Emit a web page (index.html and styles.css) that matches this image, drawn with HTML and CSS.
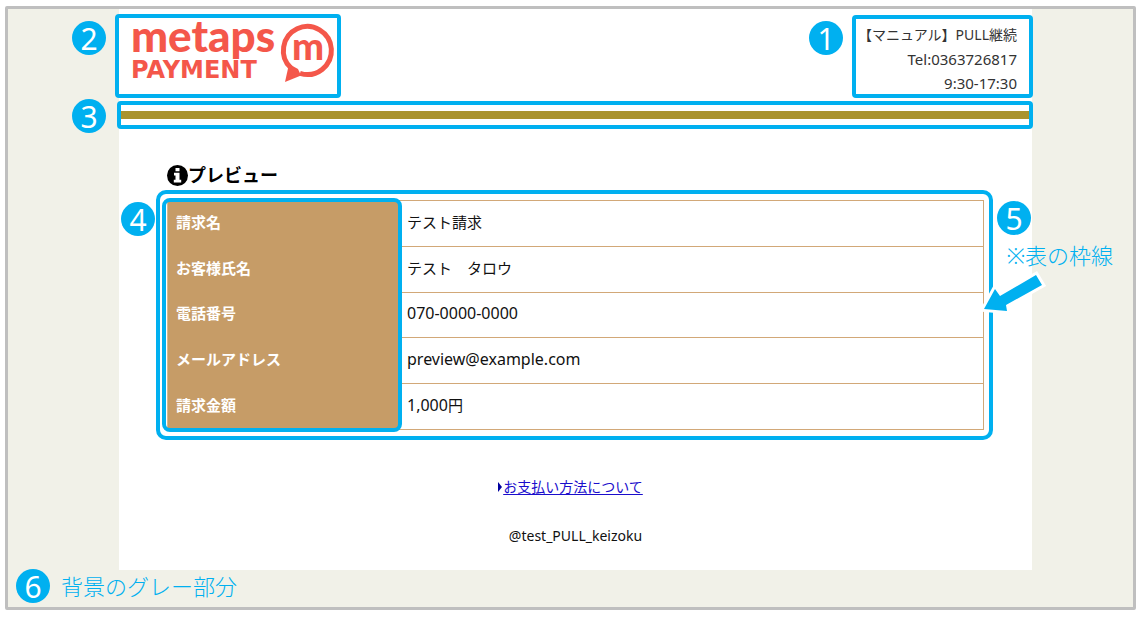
FILE: index.html
```html
<!DOCTYPE html>
<html lang="ja">
<head>
<meta charset="utf-8">
<meta name="viewport" content="width=device-width, initial-scale=1">
<title>プレビュー</title>
<link rel="stylesheet" href="styles.css">
</head>
<body>
<div class="frame">
  <div class="page">
    <header class="header">
      <div class="brand">
        <svg class="logo" viewBox="0 0 202 60" role="img" aria-label="metaps PAYMENT">
          <text class="logo-name" x="-2" y="29">metaps</text>
          <text class="logo-sub" x="-2" y="55">PAYMENT</text>
          <path class="logo-bubble" d="M158 45 A24 24 0 1 1 167 50.300"/>
          <path class="logo-tail" d="M156 41 L152 59 L168 52.500 L165 46 Z"/>
          <text class="logo-mark" x="175" y="37" text-anchor="middle">m</text>
        </svg>
        <span class="outline outline-brand"></span>
        <span class="badge badge-brand">2</span>
      </div>
      <div class="contact">
        <p>【マニュアル】PULL継続</p>
        <p class="latin">Tel:0363726817</p>
        <p class="latin">9:30⁃17:30</p>
        <span class="outline outline-contact"></span>
        <span class="badge badge-contact">1</span>
      </div>
    </header>
    <div class="rule">
      <span class="outline outline-rule"></span>
      <span class="badge badge-rule">3</span>
    </div>
    <main class="main">
      <h1 class="title">
        <svg class="info" viewBox="0 0 21 21" aria-hidden="true">
          <circle cx="10.500" cy="10.500" r="10.500"/>
          <path d="M8.500 3h4v3.200h-4z M7 7.800h5.500v7h1.700v2.700H6.800v-2.700h1.700v-4.300H7z"/>
        </svg>プレビュー</h1>
      <div class="details">
        <table class="table">
          <tr><th scope="row">請求名</th><td>テスト請求</td></tr>
          <tr><th scope="row">お客様氏名</th><td>テスト　タロウ</td></tr>
          <tr><th scope="row">電話番号</th><td class="latin">070-0000-0000</td></tr>
          <tr><th scope="row">メールアドレス</th><td class="latin">preview@example.com</td></tr>
          <tr><th scope="row">請求金額</th><td><span class="latin">1,000</span>円</td></tr>
        </table>
        <span class="outline outline-table"></span>
        <span class="outline outline-labels"></span>
        <span class="badge badge-labels">4</span>
        <span class="badge badge-table">5</span>
        <span class="note note-table">※表の枠線</span>
        <svg class="arrow" viewBox="0 0 70 50" aria-hidden="true">
          <path d="M5 41 L16 21 L21 28 L57 7 L63 17 L27 37 L28 43 Z"/>
        </svg>
      </div>
      <p class="methods"><a href="#methods">お支払い方法について</a></p>
      <p class="account">@test_PULL_keizoku</p>
    </main>
  </div>
  <span class="badge badge-background">6</span>
  <span class="note note-background">背景のグレー部分</span>
</div>
</body>
</html>
```
FILE: styles.css
```css
* { box-sizing: border-box; }

body {
  margin: 6px 1px 21px 5px;
  background: #fff;
  color: #111;
  font-family: "Noto Sans", "Noto Sans CJK JP", sans-serif;
  font-size: 15px;
}

p, h1 { margin: 0; }

.frame {
  position: relative;
  padding: 0 101px 37px 111px;
  border: 3px solid #bfbfbf;
  border-radius: 2px;
  background: #f1f1e8;
}

.page { background: #fff; }

.header {
  display: flex;
  justify-content: space-between;
  align-items: flex-start;
  padding: 14px 15px 16px 14px;
}

.brand, .contact, .rule, .details { position: relative; }

.logo {
  display: block;
  width: 202px;
  height: 60px;
  overflow: visible;
}

.logo text { fill: #f4574a; font-family: Lato, sans-serif; font-weight: 900; }
.logo .logo-name { font-size: 44px; }
.logo .logo-sub { font-family: "DejaVu Sans", sans-serif; font-size: 24px; font-weight: 700; }
.logo .logo-mark { font-size: 38px; }
.logo-bubble { fill: none; stroke: #f4574a; stroke-width: 5; }
.logo-tail { fill: #f4574a; }

.contact {
  color: #333;
  font-size: 14px;
  line-height: 24px;
  text-align: right;
}

.contact .latin { font-size: 15px; }

.rule { height: 8px; background: #a9932e; }

.main { padding: 44px 48px 22px; }

.title {
  display: flex;
  align-items: center;
  margin-bottom: 13px;
  font-size: 18px;
  line-height: 24px;
  color: #000;
}

.info { width: 21px; height: 21px; }
.info path { fill: #fff; }

.table {
  width: 100%;
  height: 230px;
  border-collapse: collapse;
  border: 1px solid #d9b78e;
}

.table th, .table td {
  padding: 0 8px 3px;
  text-align: left;
  line-height: 24px;
}

.table th {
  width: 232px;
  background: #c69c67;
  color: #fff;
}

.table td { padding-left: 7px; border: 1px solid #d2a878; }
.table .latin { font-size: 16px; }

.methods, .account { text-align: center; line-height: 24px; font-size: 14px; }
.methods { margin-top: 45px; padding-right: 10px; }
.account { margin-top: 25px; }

.methods a { color: #1a0dcc; text-underline-offset: 2px; }

.methods::before {
  content: "";
  display: inline-block;
  margin-right: 1px;
  border: solid transparent;
  border-width: 5px 0 5px 4px;
  border-left-color: #0000a0;
}

.outline {
  position: absolute;
  border: 4px solid #00b0f0;
  border-radius: 4px;
}

.outline-brand { inset: -9px -6px -15px -18px; }
.outline-contact { top: -8px; right: -16px; bottom: -3px; width: 181px; }
.outline-rule { inset: -10px -1px -10px -2px; }
.outline-table { inset: -10px -9px -10px -11px; border-radius: 10px; }
.outline-labels { top: -2px; left: -5px; bottom: -2px; width: 240px; border-radius: 8px; }

.badge {
  position: absolute;
  width: 34px;
  height: 34px;
  border-radius: 50%;
  background: #00b0f0;
  color: #fff;
  font-size: 30px;
  line-height: 35px;
  text-align: center;
}

.badge-brand { top: -2px; left: -61px; }
.badge-contact { top: -2px; right: 174px; }
.badge-rule { top: -12px; left: -47px; }
.badge-labels { top: 2px; left: -46px; }
.badge-table { top: 1px; right: -47px; }
.badge-background { left: 8px; bottom: 4px; }

.note {
  position: absolute;
  color: #00b0f0;
  font-size: 22px;
  font-weight: 300;
  line-height: 30px;
  white-space: nowrap;
}

.note-table { top: 40px; right: -129px; }
.note-background { left: 53px; bottom: 6px; }

.arrow {
  position: absolute;
  top: 68px;
  right: -65px;
  width: 70px;
  height: 50px;
}

.arrow path { fill: #00b0f0; stroke: #fff; stroke-width: 6; paint-order: stroke; }
```
